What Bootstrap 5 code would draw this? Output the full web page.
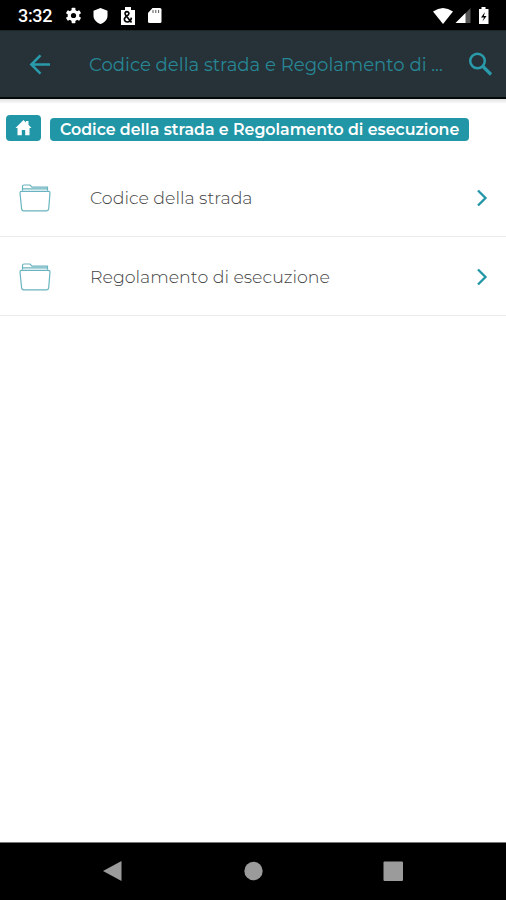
<!DOCTYPE html>
<html lang="it">
<head>
<meta charset="utf-8">
<meta name="viewport" content="width=device-width, initial-scale=1">
<title>Codice della strada</title>
<link href="https://cdn.jsdelivr.net/npm/bootstrap@5.3.0/dist/css/bootstrap.min.css" rel="stylesheet">
<style>
:root{--teal:#2196a6}
body{font-family:Montserrat,Inter,sans-serif;background:#fff;height:900px;overflow:hidden}
svg{display:block;flex-shrink:0}
.statusbar{height:30px;background:#000;color:#fff;padding:1px 15px 0 18px;font:500 18px/28px Roboto,sans-serif}
.clock{width:47px;letter-spacing:-.35px}
.appbar{height:69px;background:#263238;border-top:1px solid #1c2624;border-bottom:2px solid #050808;color:#2a9bab;padding:0 12px 0 28px}
.app-title{font-size:18.100px;font-weight:400;line-height:24px;margin-left:37px;padding-top:2px;width:379px;color:#278795}
.bar-shadow{height:5px;background:linear-gradient(#dfe0e0,#fff)}
.crumbs{height:54px;padding:11px 0 0 6px}
.crumb{background:var(--teal);color:#fff;border-radius:4px}
.crumb-home{width:35px;height:26px}
.crumb-text{height:23px;margin:3px 0 0 9px;padding-left:10px;width:419px;font-size:15.800px;font-weight:600;line-height:23px}
.entry{height:79px;border-bottom:1px solid #ebebeb;padding:2px 18px 0 19px;color:#444}
.entry-text{font-size:17.400px;font-weight:300;line-height:24px;margin-left:39px}
.sysnav{height:58px;background:#000;border-top:1px solid #777;padding:0 0 2px 0}
</style>
</head>
<body class="d-flex flex-column">
<div class="statusbar d-flex align-items-center">
  <span class="clock">3:32</span>
  <svg width="17" height="17" viewBox="0 0 17 17"><g fill="#fff"><circle cx="8.5" cy="8.5" r="5.8"/><rect x="6.6" y=".8" width="3.8" height="15.4" rx=".8"/><rect x="6.6" y=".8" width="3.8" height="15.4" rx=".8" transform="rotate(60 8.5 8.5)"/><rect x="6.6" y=".8" width="3.8" height="15.4" rx=".8" transform="rotate(120 8.5 8.5)"/></g><circle cx="8.5" cy="8.5" r="2.6"/></svg>
  <svg class="ms-2 me-2" width="20" height="18" viewBox="0 0 20 18"><path fill="#fff" d="M10.500 1l7 2.700v5c0 3.800-3 7-7 8.300-4-1.300-7-4.500-7-8.300v-5z"/></svg>
  <svg width="20" height="20" viewBox="0 0 20 20"><path fill="#fff" d="M4 4h3V1h6v3h4v15H3V4z"/><path d="M13.500 16.500L7.600 9C6.300 7 7.400 5.700 9 5.700S11.700 7.500 10.200 8.900L7.300 11.400C5.400 13.200 6.600 16 9.200 16c2.200 0 3.900-1.700 4.200-4.300" fill="none" stroke="#000" stroke-width="1.700"/></svg>
  <svg class="ms-2" width="17" height="18" viewBox="0 0 17 18"><path fill="#fff" d="M6.500 1H14Q15.500 1 15.500 2.500v12Q15.500 16 14 16H3.500Q2 16 2 14.500V6z"/><path d="M7 3v3M9.800 3v3M12.600 3v3" stroke="#444" stroke-width=".9"/></svg>
  <svg class="ms-auto" width="58" height="20" viewBox="0 0 58 20"><path fill="#fff" d="M0 5.500Q10-1.500 20 5.500L10 18z"/><path fill="#555" d="M37.500 2v15H23z"/><path fill="#fff" d="M32.500 7v10H22.500z"/><path fill="#fff" d="M46 3h2.500V1h4v2H55.500v15H46z"/><path d="M52 6l-4 5.500h3l-1.500 4 4-5.500h-2.700z"/></svg>
</div>
<header class="appbar d-flex align-items-center">
  <svg width="24" height="24" viewBox="0 0 24 24" fill="none" stroke="currentColor" stroke-width="2.500"><path d="M22 12.500H4M12.500 3.300L3.300 12.500l9.200 9.200"/></svg>
  <div class="app-title text-nowrap"><span>Codice della strada e Regolamento di ...</span></div>
  <svg width="26" height="26" viewBox="0 0 26 26" fill="none" stroke="currentColor"><circle cx="9.500" cy="10" r="7.300" stroke-width="2.500"/><path d="M15 15.500l8 8" stroke-width="3.200"/></svg>
</header>
<div class="bar-shadow"></div>
<nav class="crumbs d-flex">
  <a class="crumb crumb-home d-flex align-items-center justify-content-center" href="#" aria-label="Home"><svg width="18" height="18" viewBox="0 0 18 18" fill="#fff"><path d="M8.500 1L11 3.400V2h2.500v3.800L16.500 9h-2v7.300h-4.300V11H6.800v5.300H2.500V9H.5z"/></svg></a>
  <div class="crumb crumb-text text-nowrap"><span>Codice della strada e Regolamento di esecuzione</span></div>
</nav>
<main class="flex-grow-1">
  <div class="entry d-flex align-items-center">
    <svg width="32" height="30" viewBox="0 0 32 30" fill="none" stroke="#69b4c0" stroke-width="1.200"><path d="M3.500 7.500V3.500Q3.500 2 5 2h6l2 2.200h15.500v3.300M3.500 5.800H28M2.500 8.300h27Q31 8.300 31 9.800l-1.300 16q-.2 2-2 2H4.600q-1.700 0-2-2L1 10Q1 8.300 2.500 8.300z"/></svg>
    <div class="entry-text"><span>Codice della strada</span></div>
    <svg class="ms-auto" width="12" height="18" viewBox="0 0 12 18" fill="none" stroke="#2196a6" stroke-width="2.300"><path d="M2 1.500L9.500 9 2 16.500"/></svg>
  </div>
  <div class="entry d-flex align-items-center">
    <svg width="32" height="30" viewBox="0 0 32 30" fill="none" stroke="#69b4c0" stroke-width="1.200"><path d="M3.500 7.500V3.500Q3.500 2 5 2h6l2 2.200h15.500v3.300M3.500 5.800H28M2.500 8.300h27Q31 8.300 31 9.800l-1.300 16q-.2 2-2 2H4.600q-1.700 0-2-2L1 10Q1 8.300 2.500 8.300z"/></svg>
    <div class="entry-text"><span>Regolamento di esecuzione</span></div>
    <svg class="ms-auto" width="12" height="18" viewBox="0 0 12 18" fill="none" stroke="#2196a6" stroke-width="2.300"><path d="M2 1.500L9.500 9 2 16.500"/></svg>
  </div>
</main>
<footer class="sysnav d-flex align-items-center justify-content-center">
  <svg width="301" height="22" viewBox="0 0 301 22" fill="#9b9b9b"><path d="M18.500 1v20L0 11z"/><circle cx="150.500" cy="11" r="9.200"/><rect x="280.500" y="1.500" width="19.500" height="19.500" rx="1"/></svg>
</footer>
<script src="https://cdn.jsdelivr.net/npm/bootstrap@5.3.0/dist/js/bootstrap.bundle.min.js"></script>
</body>
</html>
